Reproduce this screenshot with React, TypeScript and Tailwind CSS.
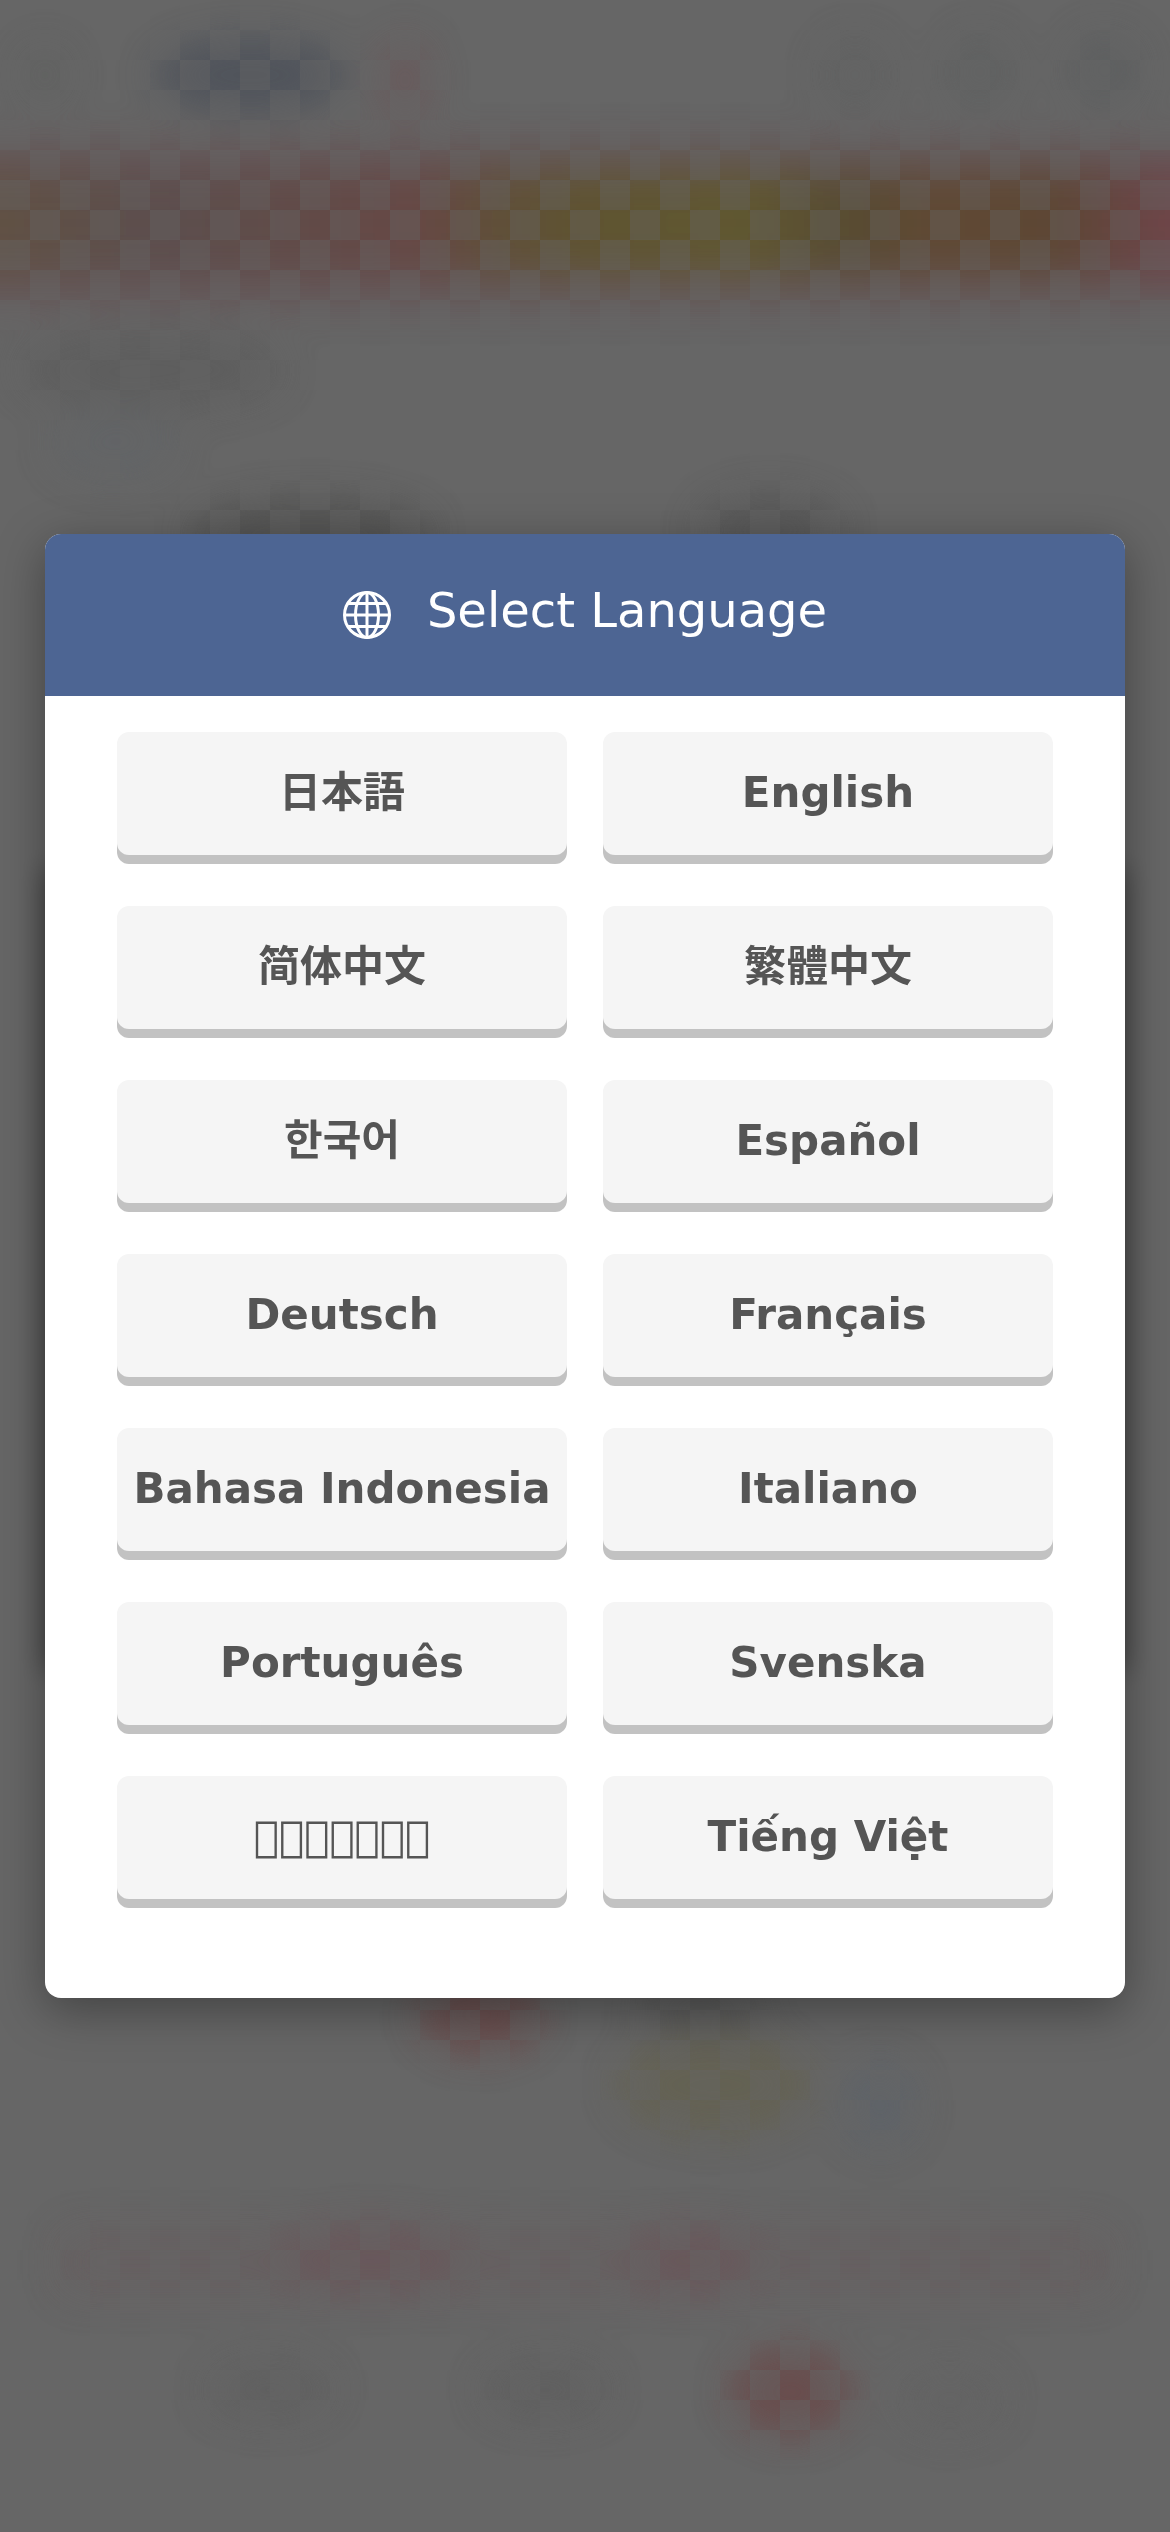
import { useState } from "react";

interface Language {
  code: string;
  label: string;
  name?: string;
}

interface Glow {
  x: number;
  y: number;
  rx: number;
  ry: number;
  color: string;
}

const languages: Language[] = [
  { code: "ja", label: "日本語" },
  { code: "en", label: "English" },
  { code: "zh-Hans", label: "简体中文" },
  { code: "zh-Hant", label: "繁體中文" },
  { code: "ko", label: "한국어" },
  { code: "es", label: "Español" },
  { code: "de", label: "Deutsch" },
  { code: "fr", label: "Français" },
  { code: "id", label: "Bahasa Indonesia" },
  { code: "it", label: "Italiano" },
  { code: "pt", label: "Português" },
  { code: "sv", label: "Svenska" },
  // no glyphs for this one, it draws as empty boxes
  { code: "th", label: "\uE000\uE000\uE000\uE000\uE000\uE000\uE000", name: "ภาษาไทย" },
  { code: "vi", label: "Tiếng Việt" },
];

const glows: Glow[] = [
  { x: 250, y: 75, rx: 95, ry: 34, color: "#4a4f59" },
  { x: 405, y: 80, rx: 24, ry: 40, color: "#6a585a" },
  { x: 45, y: 75, rx: 20, ry: 26, color: "#5f605f" },
  { x: 855, y: 75, rx: 30, ry: 34, color: "#606161" },
  { x: 980, y: 72, rx: 30, ry: 34, color: "#5e6060" },
  { x: 1105, y: 70, rx: 34, ry: 34, color: "#5c5e5f" },
  { x: 150, y: 370, rx: 130, ry: 36, color: "#5c5c5c" },
  { x: 115, y: 445, rx: 60, ry: 30, color: "#626568" },
  { x: 310, y: 535, rx: 120, ry: 34, color: "#50504f" },
  { x: 770, y: 530, rx: 70, ry: 34, color: "#555" },
  { x: 480, y: 2015, rx: 60, ry: 36, color: "#6b4848" },
  { x: 700, y: 2005, rx: 60, ry: 22, color: "#555" },
  { x: 715, y: 2085, rx: 95, ry: 48, color: "#64614f" },
  { x: 880, y: 2105, rx: 34, ry: 40, color: "#5d636a" },
  { x: 370, y: 2258, rx: 90, ry: 32, color: "#6a5458" },
  { x: 690, y: 2260, rx: 60, ry: 32, color: "#6a5458" },
  { x: 270, y: 2390, rx: 60, ry: 26, color: "#5f5f5f" },
  { x: 545, y: 2390, rx: 60, ry: 26, color: "#5e5e5e" },
  { x: 790, y: 2392, rx: 58, ry: 42, color: "#6a4747" },
  { x: 950, y: 2400, rx: 50, ry: 30, color: "#636363" },
];

const Backdrop = () => (
  <svg
    className="absolute inset-0 h-full w-full"
    viewBox="0 0 1170 2532"
    preserveAspectRatio="xMidYMid slice"
    aria-hidden="true"
  >
    <defs>
      <linearGradient id="band" gradientUnits="userSpaceOnUse" x1="0" y1="0" x2="1170" y2="0">
        <stop offset="0" stopColor="#604b3a" />
        <stop offset="0.13" stopColor="#5a4847" />
        <stop offset="0.25" stopColor="#604440" />
        <stop offset="0.36" stopColor="#67403c" />
        <stop offset="0.42" stopColor="#5f492d" />
        <stop offset="0.5" stopColor="#5e4f22" />
        <stop offset="0.64" stopColor="#5f5422" />
        <stop offset="0.72" stopColor="#544424" />
        <stop offset="0.8" stopColor="#5f4126" />
        <stop offset="0.9" stopColor="#5b3f26" />
        <stop offset="0.96" stopColor="#673b37" />
        <stop offset="1" stopColor="#723c42" />
      </linearGradient>
      <filter
        id="soft"
        filterUnits="userSpaceOnUse"
        x="-100"
        y="-100"
        width="1370"
        height="2732"
        colorInterpolationFilters="sRGB"
      >
        <feGaussianBlur stdDeviation="20" />
      </filter>
      <filter id="shade" filterUnits="userSpaceOnUse" x="-100" y="600" width="1370" height="1300">
        <feGaussianBlur stdDeviation="14" />
      </filter>
      <pattern id="checker" width="60" height="60" patternUnits="userSpaceOnUse">
        <path d="M30 0h30v30H30zM0 30h30v30H0z" fill="#fff" />
      </pattern>
      <mask id="checks" maskUnits="userSpaceOnUse" x="0" y="0" width="1170" height="2532">
        <rect width="1170" height="2532" fill="url(#checker)" />
      </mask>
      <g id="glows" filter="url(#soft)">
        <rect x="-60" y="145" width="1290" height="158" fill="#654c4e" opacity="0.7" />
        <rect x="-60" y="174" width="1290" height="98" fill="url(#band)" />
        <rect x="60" y="2230" width="1050" height="64" fill="#685c5e" opacity="0.6" />
        {glows.map((glow) => (
          <ellipse
            key={`${glow.x}-${glow.y}`}
            cx={glow.x}
            cy={glow.y}
            rx={glow.rx}
            ry={glow.ry}
            fill={glow.color}
          />
        ))}
      </g>
    </defs>
    <rect width="1170" height="2532" fill="#666" />
    <use href="#glows" opacity="0.48" />
    <g mask="url(#checks)">
      <use href="#glows" opacity="0.55" />
    </g>
    <rect x="45" y="870" width="1080" height="800" fill="#000" opacity="0.4" filter="url(#shade)" />
  </svg>
);

const GlobeIcon = () => (
  <svg
    className="h-12 w-12 shrink-0"
    viewBox="0 0 48 48"
    fill="none"
    stroke="currentColor"
    strokeWidth="3"
    aria-hidden="true"
  >
    <circle cx="24" cy="24" r="22.5" />
    <ellipse cx="24" cy="24" rx="11.5" ry="22.5" />
    <path d="M24 1.5v45M1.5 24h45M4.5 12.5h39M4.5 35.5h39" />
  </svg>
);

const App = () => {
  const [selected, setSelected] = useState("");

  return (
    <div
      lang={selected || "en"}
      className="relative flex min-h-screen items-center overflow-hidden bg-[#666] px-[45px] font-['DejaVu_Sans','Noto_Sans_CJK_JP',sans-serif]"
    >
      <Backdrop />
      <div
        role="dialog"
        aria-modal="true"
        aria-labelledby="language-title"
        className="relative w-full overflow-hidden rounded-2xl bg-white shadow-[0_12px_48px_rgba(0,0,0,0.35)]"
      >
        <div className="flex h-[162px] items-center justify-center gap-9 bg-[#4d6593] text-white">
          <GlobeIcon />
          <h1 id="language-title" className="pb-2.5 text-5xl">
            Select Language
          </h1>
        </div>
        <div className="grid grid-cols-2 gap-x-9 gap-y-[51px] px-[72px] pt-9 pb-[99px]">
          {languages.map((language) => (
            <button
              key={language.code}
              type="button"
              aria-label={language.name}
              onClick={() => setSelected(language.code)}
              className="h-[123px] rounded-xl bg-[#f5f5f5] pb-0.5 text-[42px] font-bold whitespace-nowrap text-[#555] shadow-[0_9px_0_#c2c2c2]"
            >
              {language.label}
            </button>
          ))}
        </div>
      </div>
    </div>
  );
};

export default App;
